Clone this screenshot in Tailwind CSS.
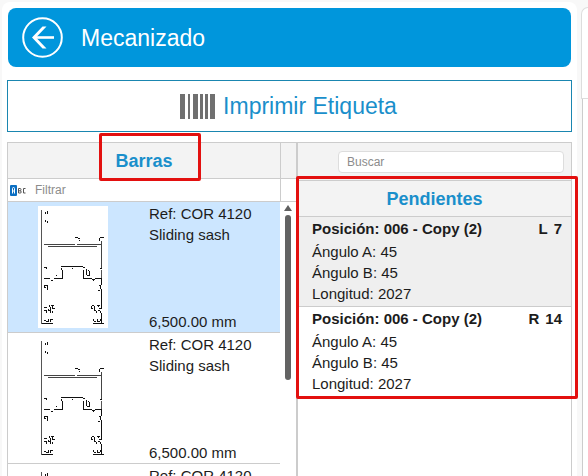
<!DOCTYPE html>
<html lang="es">
<head>
<meta charset="utf-8">
<meta name="viewport" content="width=device-width, initial-scale=1">
<title>Mecanizado</title>
<script src="https://cdn.jsdelivr.net/npm/@tailwindcss/browser@4"></script>
</head>
<body class="h-screen overflow-hidden bg-[#f8f8f8] font-['Liberation_Sans',Arial,sans-serif] text-[15px] leading-[21px] text-[#1c1c1c]">

<svg class="hidden" aria-hidden="true">
  <symbol id="profile" viewBox="24 18 210 366">
    <g fill="none" stroke="#111" stroke-width="3" shape-rendering="crispEdges">
      <path stroke="#555" d="M34.5 30V371"/>
      <path d="M35 370.5H69M188 370.5H221"/>
      <path stroke="#444" d="M43 133.5H134M142 133.5H215M54 139.5H202M214.5 122V203"/>
      <path d="M134 112.5H145M145 115.5H150M147 121.5H150M208 121.5V114M210 112.5H222M94 199.5H159M93 203V209M97.5 209V236M43 235.5H61M73 235.5H98M160 235.5H186M194 235.5H215M64 241.5H69M126 205.5H129M159 202.5H165M160.500 211V236M43 201.500H50V206M209 204.500H215"/>
      <path stroke="#555" d="M214.500 209V233"/>
      <path stroke-width="4" d="M215 233V255M215 267V326M215 340V371"/>
      <path d="M168 207V225M174 209V213M177 213V228M171 225H180M187 236L191 241L194 236M45 35V41M51 33V41M45 61V66M51 62V69M79 227H82"/>
      <path d="M42 257H51V270M43 257V263M45 263H49M207 257H212M212 257V268M205 270H210M210 263V268"/>
      <path d="M42 322.500H51M54 328.500H57M58 316V322M61 322V330M64 316.500H73M66 316V328M70 325.500H75M43 332.500H52M50 332V339M55 332.500H62M60 332V339M66 333V340M43 360.500H49M48 363.500H54M55 358V365M61 357V365M64 357.500H69"/>
      <path d="M186 316.500H191M184 319V325M183 325.500H190M193 319V330M202 316.500H210M204 316V322M207 325.500H214M192 332.500H199M198 332V339M203 332.500H211M210 332V339M191 356V362M192 363.500H198M201 357V365M205 363.500H209M210 357V364"/>
    </g>
  </symbol>
</svg>

<div class="flex h-full gap-1 pt-0.5 pl-0.5">
  <main class="flex min-w-0 flex-1 flex-col rounded-t-lg bg-white px-[5px] pt-1.5">

    <header class="mx-px flex h-[59px] shrink-0 items-center gap-[18px] rounded-lg bg-[#0096dc] px-3.5">
      <button type="button" aria-label="Volver" class="size-[41px] text-white">
        <svg viewBox="0 0 41 41" class="size-full" fill="none" stroke="currentColor" stroke-width="2">
          <circle cx="20.5" cy="20.5" r="19.3"/>
          <path stroke-width="2.6" d="M32 20.5H12"/>
          <path fill="currentColor" stroke="none" d="M20.5 9.5H24.5L14 20.5L24.5 31.5H20.5L10 20.5Z"/>
        </svg>
      </button>
      <h1 class="text-[23px] leading-7 text-white">Mecanizado</h1>
    </header>

    <button type="button" class="mt-[13px] flex h-[52px] shrink-0 items-center justify-center gap-2 border border-[#1a86b0] bg-white pr-0.5 text-[23px] leading-7 text-[#1a8fcb]">
      <svg viewBox="0 0 35 25" class="h-[25px] w-[35px]" fill="#707070" aria-hidden="true">
        <path d="M0 0H5V25H0ZM8 0H10V25H8ZM13 0H18V25H13ZM20 0H23V25H20ZM25 0H28V25H25ZM30 0H35V25H30Z"/>
      </svg>
      Imprimir Etiqueta
    </button>

    <div class="mt-2.5 flex min-h-0 flex-1">
      <section class="flex w-[290px] shrink-0 flex-col border border-b-0 border-[#ccc]" aria-labelledby="bars-title">
        <div class="flex h-9 shrink-0 border-b border-[#ccc] bg-[#f3f3f3]">
          <div class="flex flex-1 items-center justify-center">
            <h2 id="bars-title" class="relative text-lg leading-6 font-bold text-[#1a8fcb]">Barras
              <span class="absolute -top-4 -right-7 -bottom-2 -left-4 rounded-xs border-3 border-[#e3100f]"></span>
            </h2>
          </div>
          <div class="w-4 border-l border-[#ccc]"></div>
        </div>
        <div class="flex h-[23px] shrink-0 border-b border-[#ccc] bg-white">
          <label class="flex flex-1 items-center gap-[9px] pl-0.5">
            <svg viewBox="0 0 16 11" class="h-[11px] w-4 shrink-0" aria-label="Filtrar por texto">
              <rect width="7" height="11" rx="1" fill="#0b6fc2"/>
              <path d="M2.500 8.500V3.500Q2.500 2.500 3.500 2.500T4.500 3.500V8.500M2.500 6H4.500" fill="none" stroke="#fff"/>
              <path d="M8.500 3.500H10.200Q11 3.500 11 4.600T10.200 5.800H8.500M10.200 5.800Q11.200 5.800 11.200 7T10.200 8H8.500V3.500M15.500 3.500H13.500V8H15.500" fill="none" stroke="#555"/>
            </svg>
            <input type="text" placeholder="Filtrar" class="w-full min-w-0 text-xs outline-none placeholder:text-[#8c8c8c]">
          </label>
          <div class="w-4 border-l border-[#ccc]"></div>
        </div>
        <div class="flex min-h-0 flex-1">
          <ul class="min-w-0 flex-1 overflow-hidden">
            <li class="flex h-[131px] gap-[41px] border-b border-[#ccc] bg-[#cce6ff] pl-[30px]">
              <svg class="mt-1 h-[122px] w-[70px] shrink-0 bg-white"><use href="#profile"/></svg>
              <div class="flex flex-col justify-between pt-px">
                <p>Ref: COR 4120<br>Sliding sash</p>
                <p>6,500.00 mm</p>
              </div>
            </li>
            <li class="flex h-[131px] gap-[41px] border-b border-[#ccc] bg-white pl-[30px]">
              <svg class="mt-1 h-[122px] w-[70px] shrink-0 bg-white"><use href="#profile"/></svg>
              <div class="flex flex-col justify-between pt-px">
                <p>Ref: COR 4120<br>Sliding sash</p>
                <p>6,500.00 mm</p>
              </div>
            </li>
            <li class="flex h-[131px] gap-[41px] border-b border-[#ccc] bg-white pl-[30px]">
              <svg class="mt-1 h-[122px] w-[70px] shrink-0 bg-white"><use href="#profile"/></svg>
              <div class="flex flex-col justify-between pt-px">
                <p>Ref: COR 4120<br>Sliding sash</p>
                <p>6,500.00 mm</p>
              </div>
            </li>
          </ul>
          <div class="flex w-4 flex-col items-center gap-1 bg-white pt-[3px]" aria-hidden="true">
            <svg viewBox="0 0 8 6" class="h-1.5 w-2 shrink-0" fill="#606060"><path d="M4 0L8 6H0Z"/></svg>
            <span class="h-[165px] w-1.5 rounded-full bg-[#636363]"></span>
          </div>
        </div>
      </section>

      <section class="flex min-w-0 flex-1 flex-col border-t border-r border-l border-[#ccc]" aria-labelledby="pending-title">
        <div class="flex h-[37px] shrink-0 items-center justify-end bg-[#f3f3f3] pr-[7px]">
          <input type="search" aria-label="Buscar" placeholder="Buscar" class="h-[22px] w-[226px] rounded-sm border border-[#ddd] bg-white px-2 text-xs outline-none placeholder:text-[#8c8c8c]">
        </div>
        <div class="relative">
          <h2 id="pending-title" class="flex h-[37px] items-center justify-center border-t border-b border-[#ccc] bg-[#f3f3f3] text-lg leading-6 font-bold text-[#1a8fcb]">Pendientes</h2>
          <ul>
            <li class="h-[90px] border-b border-[#ccc] bg-[#efefef] pt-px pr-[9px] pl-3.5">
              <div class="flex justify-between font-bold"><span>Posición: 006 - Copy (2)</span><span class="flex gap-1.5"><span>L</span><span>7</span></span></div>
              <p class="pt-0.5">Ángulo A: 45<br>Ángulo B: 45<br>Longitud: 2027</p>
            </li>
            <li class="h-[90px] bg-white pt-px pr-[9px] pl-3.5">
              <div class="flex justify-between font-bold"><span>Posición: 006 - Copy (2)</span><span class="flex gap-1.5"><span>R</span><span>14</span></span></div>
              <p class="pt-0.5">Ángulo A: 45<br>Ángulo B: 45<br>Longitud: 2027</p>
            </li>
          </ul>
          <span class="pointer-events-none absolute -top-1 -right-[7px] -bottom-0.5 -left-0.5 rounded-xs border-3 border-[#e3100f]"></span>
        </div>
      </section>
    </div>
  </main>

  <aside class="flex w-[7px] shrink-0 flex-col pt-[5px]">
    <div class="h-[92px] rounded-tl-lg border-t border-b border-l border-[#ddd] bg-white"></div>
    <div class="ml-px flex-1 border-l border-[#ccc] bg-white"></div>
  </aside>
</div>
</body>
</html>
